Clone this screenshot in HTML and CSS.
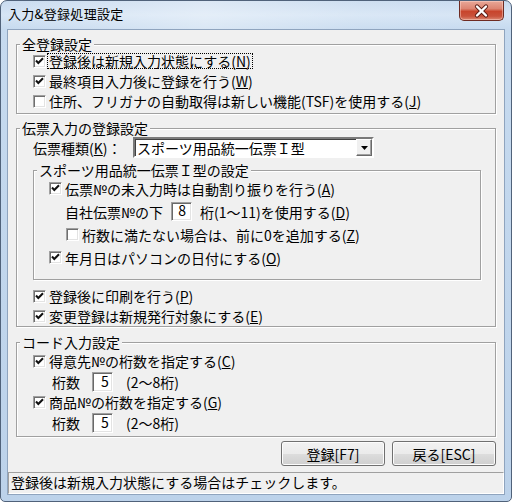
FILE: index.html
```html
<!DOCTYPE html>
<html lang="ja">
<head>
<meta charset="utf-8">
<title>入力&amp;登録処理設定</title>
<link rel="stylesheet" href="styles.css">
</head>
<body>
<div class="window">
  <div class="titlebar">
    <span class="title">入力&amp;登録処理設定</span>
    <div class="close">
      <svg width="43" height="18" viewBox="0 0 43 18">
        <path d="M17 4.5 L26 13.5 M26 4.5 L17 13.5" stroke="#5a1c14" stroke-width="4.2" stroke-linecap="round" fill="none"/>
        <path d="M17 4.5 L26 13.5 M26 4.5 L17 13.5" stroke="#ffffff" stroke-width="2.4" stroke-linecap="round" fill="none"/>
      </svg>
    </div>
  </div>
  <div class="client">
    <fieldset class="group g1">
      <legend>全登録設定</legend>
      <div class="body">
        <div class="row"><span class="cb"><svg viewBox="0 0 11 11"><path d="M2 4.6 L4.3 7 L9 2.3"/></svg></span><span class="focus">登録後は新規入力状態にする(<u>N</u>)</span></div>
        <div class="row"><span class="cb"><svg viewBox="0 0 11 11"><path d="M2 4.6 L4.3 7 L9 2.3"/></svg></span><span class="txt">最終項目入力後に登録を行う(<u>W</u>)</span></div>
        <div class="row"><span class="cb"></span><span class="txt">住所、フリガナの自動取得は新しい機能(TSF)を使用する(<u>J</u>)</span></div>
      </div>
    </fieldset>

    <fieldset class="group g2">
      <legend>伝票入力の登録設定</legend>
      <div class="body">
        <div class="typerow">
          <span class="typelabel">伝票種類(<u>K</u>)：</span>
          <div class="select">
            <span class="seltext">スポーツ用品統一伝票Ｉ型</span>
            <span class="arrow"><svg width="7" height="4" viewBox="0 0 7 4"><path d="M0 0 H7 L3.5 4 Z" fill="#000"/></svg></span>
          </div>
        </div>
        <fieldset class="sub">
          <legend>スポーツ用品統一伝票Ｉ型の設定</legend>
          <div class="subbody">
            <div class="srow"><span class="cb"><svg viewBox="0 0 11 11"><path d="M2 4.6 L4.3 7 L9 2.3"/></svg></span><span class="txt">伝票№の未入力時は自動割り振りを行う(<u>A</u>)</span></div>
            <div class="srow indent1"><span class="txt">自社伝票№の下</span><span class="field digits8">8</span><span class="txt">桁(1～11)を使用する(<u>D</u>)</span></div>
            <div class="srow indent2"><span class="cb"></span><span class="txt">桁数に満たない場合は、前に0を追加する(<u>Z</u>)</span></div>
            <div class="srow"><span class="cb"><svg viewBox="0 0 11 11"><path d="M2 4.6 L4.3 7 L9 2.3"/></svg></span><span class="txt">年月日はパソコンの日付にする(<u>O</u>)</span></div>
          </div>
        </fieldset>
        <div class="row print"><span class="cb"><svg viewBox="0 0 11 11"><path d="M2 4.6 L4.3 7 L9 2.3"/></svg></span><span class="txt">登録後に印刷を行う(<u>P</u>)</span></div>
        <div class="row"><span class="cb"><svg viewBox="0 0 11 11"><path d="M2 4.6 L4.3 7 L9 2.3"/></svg></span><span class="txt">変更登録は新規発行対象にする(<u>E</u>)</span></div>
      </div>
    </fieldset>

    <fieldset class="group g3">
      <legend>コード入力設定</legend>
      <div class="body">
        <div class="row first3"><span class="cb"><svg viewBox="0 0 11 11"><path d="M2 4.6 L4.3 7 L9 2.3"/></svg></span><span class="txt">得意先№の桁数を指定する(<u>C</u>)</span></div>
        <div class="digrow"><span class="txt">桁数</span><span class="field digits5">5</span><span class="txt">(2～8桁)</span></div>
        <div class="row"><span class="cb"><svg viewBox="0 0 11 11"><path d="M2 4.6 L4.3 7 L9 2.3"/></svg></span><span class="txt">商品№の桁数を指定する(<u>G</u>)</span></div>
        <div class="digrow"><span class="txt">桁数</span><span class="field digits5">5</span><span class="txt">(2～8桁)</span></div>
      </div>
    </fieldset>

    <div class="buttons">
      <button class="btn">登録[F7]</button>
      <button class="btn">戻る[ESC]</button>
    </div>

    <div class="status">登録後は新規入力状態にする場合はチェックします。</div>
  </div>
</div>
</body>
</html>
```
FILE: styles.css
```css
* { box-sizing: border-box; }
html, body { margin: 0; padding: 0; }
body {
  width: 512px;
  height: 502px;
  overflow: hidden;
  background: #ffffff;
  font-family: "Noto Sans CJK JP", "Noto Sans", sans-serif;
  font-size: 14px;
  color: #000;
}
u { text-decoration: underline; text-underline-offset: 1px; }

.window {
  width: 512px;
  height: 502px;
  border: 1px solid #50627a;
  border-radius: 7px 7px 5px 5px;
  background: linear-gradient(to bottom, #c9dbef 0px, #d6e5f5 14px, #c6daef 28px, #bcd2ea 100%);
  display: flex;
  flex-direction: column;
  overflow: hidden;
}

.titlebar {
  height: 28px;
  flex: none;
  display: flex;
  justify-content: space-between;
  align-items: flex-start;
  padding: 0 7px 0 7px;
  background: linear-gradient(to right, rgba(255,255,255,0) 0%, rgba(255,255,255,0.35) 40%, rgba(255,255,255,0.1) 70%, rgba(255,255,255,0) 100%);
}
.title {
  font-size: 13px;
  line-height: 14px;
  margin-top: 6px;
  letter-spacing: 0.3px;
}
.close {
  width: 45px;
  height: 20px;
  border: 1px solid #6e2b22;
  border-top: none;
  border-radius: 0 0 5px 5px;
  background: linear-gradient(to bottom, #e9a898 0%, #dd8572 40%, #c8452c 55%, #c9523b 80%, #dc8a74 100%);
  box-shadow: inset 0 0 0 1px rgba(255, 220, 210, 0.45);
  display: flex;
  align-items: center;
  justify-content: center;
}

.client {
  margin: 0 6px;
  height: 466px;
  flex: none;
  border: 1px solid #8fa4be;
  background: #f0f0f0;
  display: flex;
  flex-direction: column;
}

.group {
  margin: 7px 0 0 8px;
  width: 480px;
  min-width: 0;
  padding: 0 0 0 3px;
  border: 1px solid #a0a0a0;
  box-shadow: inset 1px 1px 0 #ffffff, 1px 1px 0 #ffffff;
}
.group legend, .sub legend {
  padding: 0 2px;
  line-height: 14px;
  height: 14px;
  background: #f0f0f0;
}
.g1 { padding-bottom: 2px; }
.g3 { margin-top: 8px; padding-bottom: 3px; }

.body { padding-left: 13px; }

.row {
  display: flex;
  align-items: center;
  height: 20px;
  white-space: nowrap;
}
.cb {
  width: 13px;
  height: 13px;
  flex: none;
  margin-right: 3px;
  background: #ffffff;
  border: 1px solid;
  border-color: #a0a0a0 #ffffff #ffffff #a0a0a0;
  box-shadow: inset 1px 1px 0 #6f6f6f, inset -1px -1px 0 #e3e3e3;
  display: flex;
}
.cb svg {
  width: 11px;
  height: 11px;
}
.cb svg path {
  fill: none;
  stroke: #111;
  stroke-width: 2.1;
}
.txt { line-height: 14px; }
.focus {
  line-height: 14px;
  outline: 1px dotted #000;
  outline-offset: 0;
  padding: 0 1px;
  margin-left: -1px;
}

.typerow {
  display: flex;
  align-items: center;
  height: 21px;
  margin-top: 2px;
  white-space: nowrap;
}
.typelabel { width: 100px; line-height: 14px; }
.select {
  width: 241px;
  height: 21px;
  border: 2px solid;
  border-color: #7a7a7a #ffffff #ffffff #7a7a7a;
  box-shadow: inset 1px 1px 0 #404040;
  background: #ffffff;
  display: flex;
  align-items: center;
  justify-content: space-between;
}
.seltext { padding-left: 2px; line-height: 14px; }
.arrow {
  width: 16px;
  height: 17px;
  background: #f0f0f0;
  border: 1px solid;
  border-color: #ffffff #696969 #696969 #ffffff;
  box-shadow: inset -1px -1px 0 #a0a0a0;
  display: flex;
  align-items: center;
  justify-content: center;
}

.sub {
  margin: 5px 0 0 0;
  width: 448px;
  min-width: 0;
  padding: 0 0 10px 3px;
  border: 1px solid #a0a0a0;
  box-shadow: inset 1px 1px 0 #ffffff, 1px 1px 0 #ffffff;
}
.subbody { padding-left: 12px; }
.srow {
  display: flex;
  align-items: center;
  height: 23px;
  white-space: nowrap;
}
.srow.indent1 { padding-left: 16px; }
.srow.indent2 { padding-left: 17px; }

.field {
  height: 19px;
  background: #ffffff;
  border: 1px solid;
  border-color: #a0a0a0 #ffffff #ffffff #a0a0a0;
  box-shadow: inset 1px 1px 0 #696969, inset -1px -1px 0 #e3e3e3;
  line-height: 15px;
  flex: none;
}
.digits8 {
  width: 21px;
  margin: 0 8px;
  text-align: right;
  padding-right: 5px;
}
.digits5 {
  width: 21px;
  height: 20px;
  margin: 0 13px 0 12px;
  padding-left: 8px;
  line-height: 16px;
}

.print { margin-top: 6px; }

.first3 { margin-top: 2px; }
.digrow {
  display: flex;
  align-items: center;
  height: 21px;
  padding-left: 19px;
  white-space: nowrap;
}

.buttons {
  display: flex;
  justify-content: flex-end;
  gap: 7px;
  margin-top: 4px;
  padding-right: 8px;
}
.btn {
  width: 104px;
  height: 25px;
  padding: 0;
  font-family: inherit;
  font-size: 14px;
  line-height: 14px;
  color: #000;
  border: 1px solid #707070;
  border-radius: 3px;
  background: linear-gradient(to bottom, #f2f2f2 0%, #ebebeb 50%, #dddddd 51%, #cfcfcf 100%);
  box-shadow: inset 0 0 0 1px #fcfcfc;
}

.status {
  margin-top: auto;
  height: 22px;
  border: 1px solid;
  border-color: #a0a0a0 #ffffff #ffffff #a0a0a0;
  padding-left: 2px;
  line-height: 19px;
  white-space: nowrap;
}
```
